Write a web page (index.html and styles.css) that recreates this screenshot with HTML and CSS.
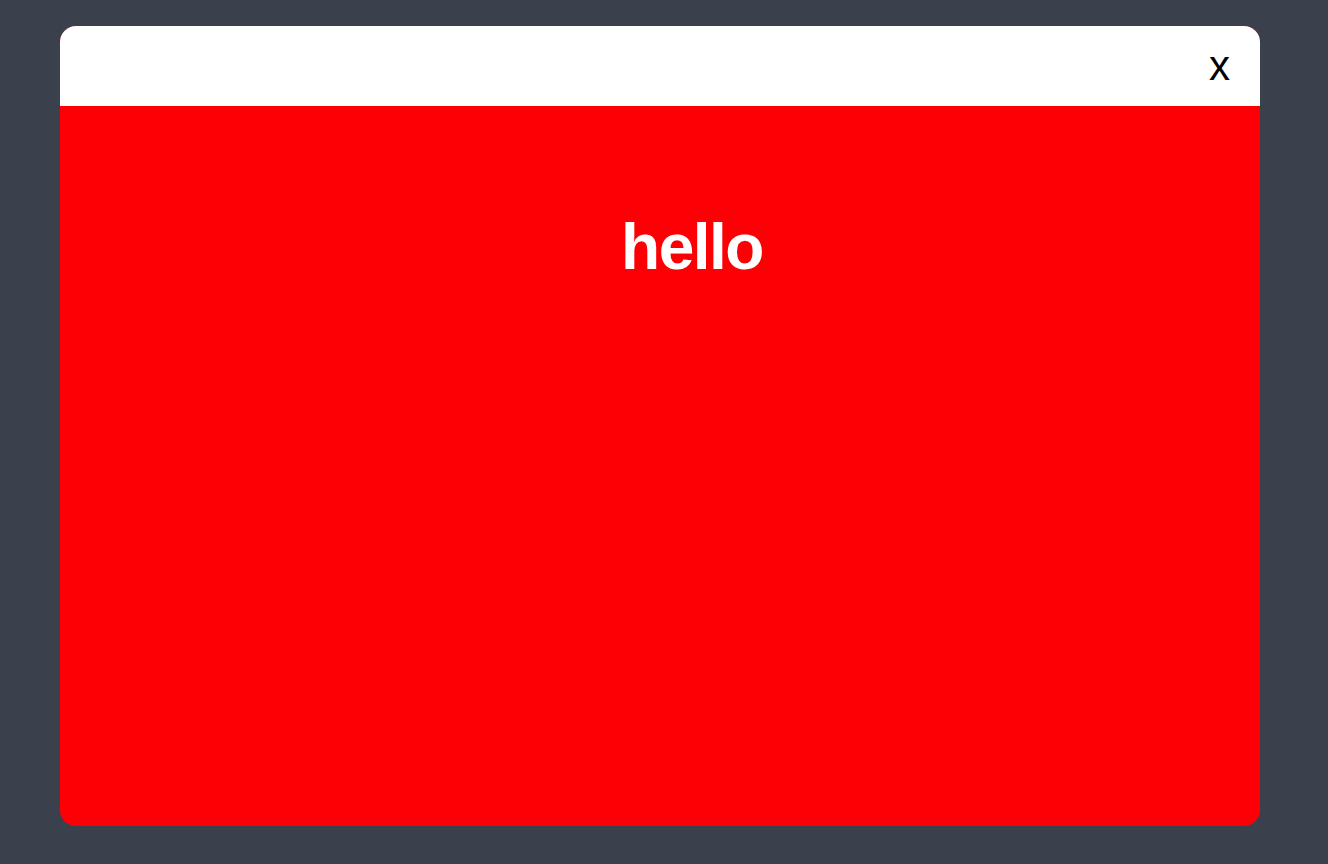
FILE: index.html
```html
<!DOCTYPE html>
<html>
<head>
<meta charset="utf-8">
<link rel="stylesheet" href="styles.css">
</head>
<body>
<div class="overlay">
  <div class="modal">
    <div class="modal-header">
      <button class="close">x</button>
    </div>
    <div class="modal-body">
      <h1 class="title">hello</h1>
    </div>
  </div>
</div>
</body>
</html>
```
FILE: styles.css
```css
html, body {
  margin: 0;
  padding: 0;
  height: 100%;
}
body {
  background: #3b414c;
  font-family: "Liberation Sans", Arial, sans-serif;
}
.overlay {
  display: flex;
  justify-content: flex-start;
  padding-top: 26px;
  padding-left: 60px;
}
.modal {
  width: 1200px;
  height: 800px;
  border-radius: 16px;
  overflow: hidden;
  display: flex;
  flex-direction: column;
  background: #fd0006;
}
.modal-header {
  height: 80px;
  background: #ffffff;
  display: flex;
  justify-content: flex-end;
  align-items: center;
  padding-right: 30px;
}
.close {
  background: none;
  border: none;
  padding: 0;
  margin-top: 0;
  font-family: "Liberation Sans", Arial, sans-serif;
  font-size: 42px;
  line-height: 1;
  color: #000;
  cursor: pointer;
}
.modal-body {
  flex: 1;
  display: flex;
  justify-content: center;
  align-items: flex-start;
  padding-top: 105px;
  padding-left: 64px;
}
.title {
  margin: 0;
  color: #fff;
  font-size: 64px;
  font-weight: bold;
  letter-spacing: -1.5px;
  line-height: 1.15;
}
```
